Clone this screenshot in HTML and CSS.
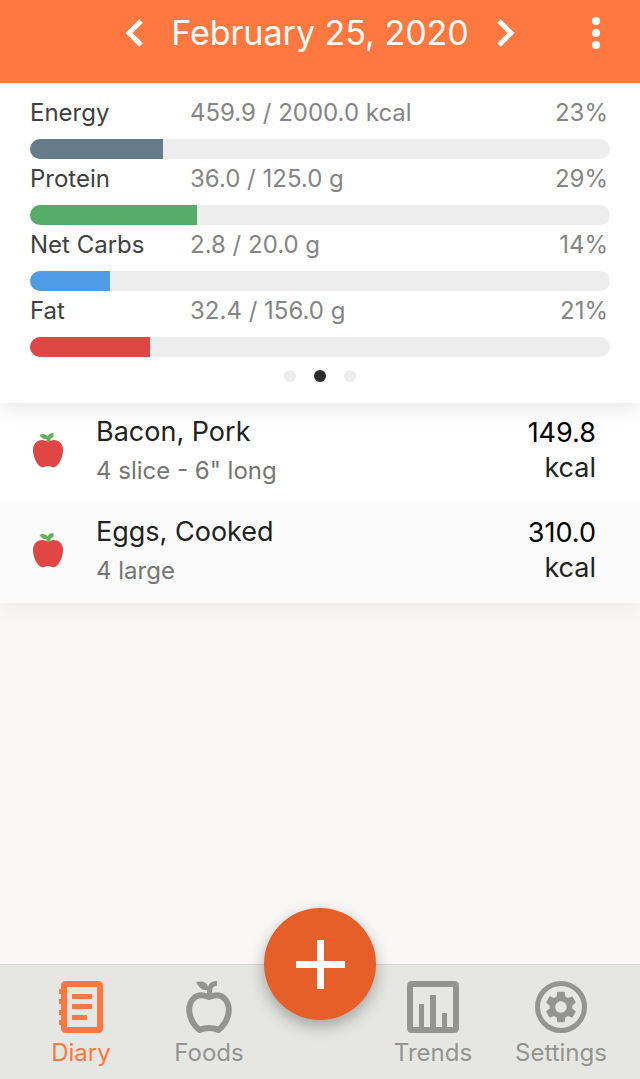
FILE: index.html
```html
<!doctype html>
<html lang="en">
	<head>
		<meta charset="utf-8">
		<meta name="viewport" content="width=device-width,initial-scale=1.0">
		<title>Diary</title>
		<link rel="stylesheet" href="styles.css">
	</head>
	<body>
		<header class="top-bar">
			<div class="date-picker">
				<button type="button" aria-label="Previous day">
					<svg width="18" height="28" viewBox="0 0 18 28"><path d="M16 2L4 14l12 12"/></svg>
				</button>
				<h1>February 25, 2020</h1>
				<button type="button" aria-label="Next day">
					<svg width="18" height="28" viewBox="0 0 18 28"><path d="M2 2l12 12L2 26"/></svg>
				</button>
			</div>
			<button type="button" class="more" aria-label="More">
				<svg width="8" height="32" viewBox="0 0 8 32"><circle cx="4" cy="4" r="4"/><circle cx="4" cy="16" r="4"/><circle cx="4" cy="28" r="4"/></svg>
			</button>
		</header>

		<section class="summary">
			<div class="nutrient">
				<span class="label">Energy</span>
				<span>459.9 / 2000.0 kcal</span>
				<span class="percent">23%</span>
			</div>
			<div class="track"><div class="fill energy" style="width:23%"></div></div>
			<div class="nutrient">
				<span class="label">Protein</span>
				<span>36.0 / 125.0 g</span>
				<span class="percent">29%</span>
			</div>
			<div class="track"><div class="fill protein" style="width:28.8%"></div></div>
			<div class="nutrient">
				<span class="label">Net Carbs</span>
				<span>2.8 / 20.0 g</span>
				<span class="percent">14%</span>
			</div>
			<div class="track"><div class="fill carbs" style="width:13.8%"></div></div>
			<div class="nutrient">
				<span class="label">Fat</span>
				<span>32.4 / 156.0 g</span>
				<span class="percent">21%</span>
			</div>
			<div class="track"><div class="fill fat" style="width:20.7%"></div></div>
			<div class="pager">
				<button type="button" aria-label="Page 1"></button>
				<button type="button" class="selected" aria-label="Page 2"></button>
				<button type="button" aria-label="Page 3"></button>
			</div>
		</section>

		<main>
			<ul class="foods">
				<li>
					<svg class="apple" width="32" height="36" viewBox="0 0 32 36">
						<path fill="#df4644" d="M16 8.500C13 7 10 6.500 7 7.500 3 9 1 12.500 1 17c0 7 3.500 13.500 7 16.500 2.500 1.500 5 .5 6-.2 1-.5 3-.5 4 0 1 .7 3.500 1.700 6 .2 3.500-3 7-9.500 7-16.500 0-4.500-2-8-6-9.500-3-1-6-.5-9 1z"/>
						<path fill="#62b25c" d="M7.500 2c3-2 7-1 8 1.500C16.500 1 18.500 0 21.500 0v4c-2 .5-3.300 1.500-3.500 4.500h-3.500V6C11.500 7 9.500 5 7.500 2z"/>
					</svg>
					<div class="food">
						<h2>Bacon, Pork</h2>
						<p>4 slice - 6" long</p>
					</div>
					<div class="amount"><b>149.8</b> <span>kcal</span></div>
				</li>
				<li>
					<svg class="apple" width="32" height="36" viewBox="0 0 32 36">
						<path fill="#df4644" d="M16 8.500C13 7 10 6.500 7 7.500 3 9 1 12.500 1 17c0 7 3.500 13.500 7 16.500 2.500 1.500 5 .5 6-.2 1-.5 3-.5 4 0 1 .7 3.500 1.700 6 .2 3.500-3 7-9.500 7-16.500 0-4.500-2-8-6-9.500-3-1-6-.5-9 1z"/>
						<path fill="#62b25c" d="M7.500 2c3-2 7-1 8 1.500C16.500 1 18.500 0 21.500 0v4c-2 .5-3.300 1.500-3.500 4.500h-3.500V6C11.500 7 9.500 5 7.500 2z"/>
					</svg>
					<div class="food">
						<h2>Eggs, Cooked</h2>
						<p>4 large</p>
					</div>
					<div class="amount"><b>310.0</b> <span>kcal</span></div>
				</li>
			</ul>
		</main>

		<nav class="tabs">
			<a class="selected" href="#diary">
				<svg width="52" height="52" viewBox="0 0 52 52">
					<path fill="currentColor" fill-rule="evenodd" d="M11 0h32q5 0 5 5v42q0 5-5 5H11q-5 0-5-5V5q0-5 5-5zm1 6v40h30V6z"/>
					<path fill="currentColor" d="M4 8h4v5H4zM4 18h4v5H4zM4 29h4v5H4zM4 39h4v5H4z"/>
					<path fill="currentColor" d="M17 13h20v5H17zM17 23h20v5H17zM17 34h15v5H17z"/>
				</svg>
				Diary
			</a>
			<a href="#foods">
				<svg width="52" height="52" viewBox="0 0 52 52">
					<path fill="none" stroke="currentColor" stroke-width="6" stroke-linejoin="round" d="M26 16c-6-2.500-11-3-15 1-4 4-5.500 9-4.500 15 1 6 5 13 10 17 3-1.500 6-2 9.500-2s6.500.5 9.500 2c5-4 9-11 10-17 1-6-.5-11-4.500-15-4-4-9-3.500-15-1z"/>
					<path fill="currentColor" d="M13 1c6-1.500 11 0 12 5C26 2 29 0 34 0v5c-4 0-5 2-5 8h-5V9c-4 1-8-2-11-8z"/>
				</svg>
				Foods
			</a>
			<a class="right" href="#trends">
				<svg width="52" height="52" viewBox="0 0 52 52">
					<path fill="currentColor" fill-rule="evenodd" d="M5 0h42q5 0 5 5v42q0 5-5 5H5q-5 0-5-5V5q0-5 5-5zm1 6v40h40V6z"/>
					<path fill="currentColor" d="M12 23h5v24h-5zM23 14h6v33h-6zM35 32h5v15h-5z"/>
				</svg>
				Trends
			</a>
			<a href="#settings">
				<svg width="52" height="52" viewBox="0 0 52 52">
					<circle cx="26" cy="26" r="23.500" fill="none" stroke="currentColor" stroke-width="5"/>
					<path fill="currentColor" transform="translate(7 7) scale(1.580)" d="M19.140 12.940c.04-.3.060-.61.060-.94 0-.32-.02-.64-.07-.94l2.030-1.580c.18-.14.230-.41.120-.61l-1.920-3.320c-.12-.22-.37-.29-.59-.22l-2.390.96c-.5-.38-1.030-.7-1.620-.94l-.36-2.540c-.04-.24-.24-.41-.48-.41h-3.840c-.24 0-.43.170-.47.410l-.36 2.540c-.59.240-1.130.57-1.620.94l-2.390-.96c-.22-.08-.47 0-.59.220L2.740 8.870c-.12.210-.08.470.12.610l2.030 1.580c-.05.3-.09.630-.09.940s.02.640.07.940l-2.030 1.580c-.18.140-.23.410-.12.610l1.920 3.320c.12.220.37.290.59.220l2.390-.96c.5.380 1.030.7 1.620.94l.36 2.540c.05.240.24.410.48.410h3.840c.24 0 .44-.17.470-.41l.36-2.540c.59-.24 1.130-.56 1.620-.94l2.390.96c.22.080.47 0 .59-.22l1.920-3.320c.12-.22.070-.47-.12-.61l-2.010-1.580zM12 15.600c-1.980 0-3.600-1.620-3.600-3.600s1.620-3.600 3.600-3.600 3.600 1.620 3.600 3.600-1.620 3.600-3.600 3.600z"/>
				</svg>
				Settings
			</a>
			<button type="button" class="add" aria-label="Add food">
				<svg width="50" height="50" viewBox="0 0 50 50"><path d="M22 1h7v21h21v7H29v21h-7V29H1v-7h21z"/></svg>
			</button>
		</nav>
	</body>
</html>
```
FILE: styles.css
```css
*{
	margin: 0;
	padding: 0;
	box-sizing: border-box;
}
body{
	display: flex;
	flex-direction: column;
	min-height: 100vh;
	background: #faf8f7;
	color: #222;
	font-family: Inter, "Liberation Sans", sans-serif;
	font-size: 24px;
}
button{
	border: none;
	background: none;
	cursor: pointer;
}
svg{
	display: block;
}

/**
 * top bar
 */
.top-bar{
	position: relative;
	z-index: 1; /* keeps the summary shadow off the bar */
	display: grid;
	grid-template-columns: 1fr auto 1fr;
	align-items: center;
	padding: 0 40px 17px;
	background: #ff7840;
	color: white;
}
.date-picker{
	grid-column: 2;
	display: flex;
	align-items: center;
	gap: 28px;
}
.date-picker path{
	fill: none;
	stroke: white;
	stroke-width: 5;
}
h1{
	font-size: 34px;
	font-weight: 400;
	line-height: 66px;
}
.more{
	justify-self: end;
	fill: white;
}

/**
 * nutrient summary
 */
.summary{
	position: relative;
	padding: 10px 30px 21px;
	background: white;
	box-shadow: 0 4px 20px rgba(0,0,0,0.1);
}
.nutrient{
	display: grid;
	grid-template-columns: 160px 1fr auto;
	padding: 0 2px 6px 0;
	line-height: 40px;
	color: #858585;
}
.label{
	color: #404040;
}
.track{
	height: 20px;
	border-radius: 10px;
	overflow: hidden;
	background: #ededed;
}
.fill{
	height: 100%;
}
.energy{
	background: #667c89;
}
.protein{
	background: #56ad69;
}
.carbs{
	background: #4f9be5;
}
.fat{
	background: #df4644;
}
.pager{
	display: flex;
	justify-content: center;
	gap: 18px;
	padding-top: 13px;
}
.pager button{
	width: 12px;
	height: 12px;
	border-radius: 50%;
	background: #ededed;
}
.pager .selected{
	background: #2b2b2b;
}

/**
 * food list
 */
main{
	flex: 1;
}
.foods{
	list-style: none;
	box-shadow: 0 4px 20px rgba(0,0,0,0.06);
}
.foods li{
	display: flex;
	padding: 10px 44px 12px 32px;
	background: white;
}
.foods li:nth-child(even){
	background: #fbfbfb;
}
.apple{
	margin: 20px 32px 0 0;
}
.food{
	flex: 1;
}
h2{
	font-size: 27px;
	font-weight: 400;
	line-height: 38px;
}
.food p{
	line-height: 40px;
	color: #757575;
}
.amount{
	width: 80px;
	padding-top: 2px;
	font-size: 27px;
	line-height: 35px;
	text-align: right;
}
.amount b{
	font-weight: 400;
	color: black;
}

/**
 * bottom tabs
 */
.tabs{
	position: relative;
	display: grid;
	grid-template-columns: 1fr 1fr 96px 1fr 1fr;
	padding: 16px 15px 10px 17px;
	border-top: 1px solid #d3d3d0;
	background: #e6e7e2;
}
.tabs a{
	display: flex;
	flex-direction: column;
	align-items: center;
	gap: 4px;
	line-height: 32px;
	color: #949492;
	text-decoration: none;
}
.tabs .selected{
	color: #ff7840;
}
.tabs .right{
	grid-column: 4;
}
.add{
	position: absolute;
	top: -57px;
	left: 50%;
	display: flex;
	align-items: center;
	justify-content: center;
	width: 112px;
	height: 112px;
	margin-left: -56px;
	border-radius: 50%;
	background: #e65f29;
	box-shadow: 0 6px 16px rgba(0,0,0,0.3);
	fill: white;
}
```
